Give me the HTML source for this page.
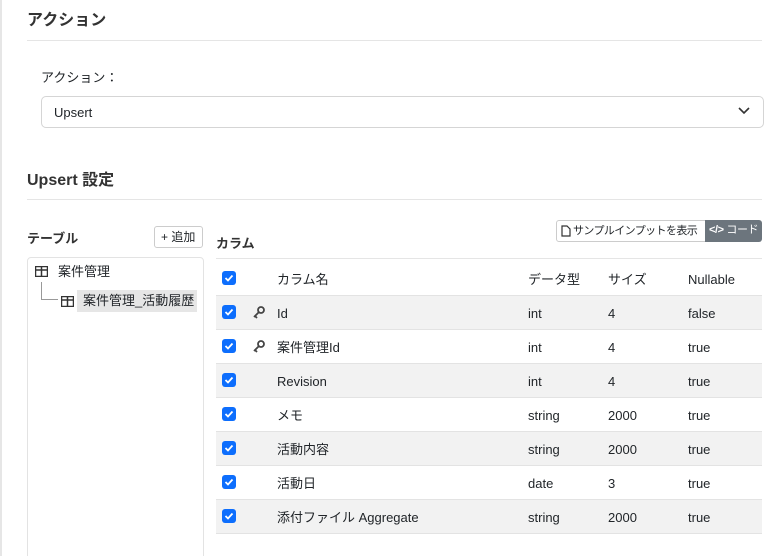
<!DOCTYPE html>
<html><head><meta charset="utf-8"><style>
*{box-sizing:border-box;margin:0;padding:0}
html,body{width:784px;height:556px;overflow:hidden}
body{background:#fff;font-family:"Liberation Sans","Noto Sans CJK JP",sans-serif;color:#212529;position:relative;font-size:13px;line-height:16px}
.a{position:absolute;white-space:nowrap}
.h{font-size:16px;line-height:20px;font-weight:bold;color:#333}
.line{position:absolute;height:1px;background:#e5e5e5}
.cb{position:absolute;width:14px;height:14px;background:#0d6efd;border-radius:3px}
.cb svg{position:absolute;left:2px;top:2px}
.row{position:absolute;left:216px;width:546px;height:34px;border-bottom:1px solid #e3e3e3}
.row span{position:absolute;top:10px;line-height:16px;white-space:nowrap}
.g{background:#f2f2f2}
</style></head><body>
<div class="a" style="left:0;top:0;width:2px;height:556px;background:#e6e6e6"></div>
<div class="a h" style="left:27px;top:11px">アクション</div>
<div class="line" style="left:27px;top:40px;width:735px"></div>
<div class="a" style="left:41px;top:70px">アクション：</div>
<div class="a" style="left:41px;top:96px;width:723px;height:32px;border:1px solid #d5d5d5;border-radius:5px"></div>
<div class="a" style="left:54px;top:105px">Upsert</div>
<svg class="a" style="left:737px;top:105px" width="14" height="12" viewBox="0 0 14 12"><path d="M2 3l5 5 5-5" stroke="#333" stroke-width="1.6" fill="none"/></svg>
<div class="a h" style="left:27px;top:171px">Upsert 設定</div>
<div class="line" style="left:27px;top:199px;width:735px"></div>
<div class="a" style="left:27px;top:231px;font-weight:bold;color:#333">テーブル</div>
<div class="a" style="left:154px;top:226px;width:49px;height:22px;border:1px solid #ccc;border-radius:3px;font-size:12px;line-height:14px;padding:3px 0 0 6px">+ 追加</div>
<div class="a" style="left:27px;top:257px;width:177px;height:310px;border:1px solid #e3e3e3;border-radius:4px"></div>
<svg class="a" style="left:35px;top:266px" width="13" height="11"><rect x="0.5" y="0.5" width="12" height="10" fill="none" stroke="#333" stroke-width="1.5"/><path d="M0 4h13M6.5 0v11" stroke="#333" stroke-width="1.5"/></svg>
<div class="a" style="left:58px;top:264px">案件管理</div>
<div class="a" style="left:41px;top:282px;width:17px;height:18px;border-left:1px solid #999;border-bottom:1px solid #999"></div>
<div class="a" style="left:77px;top:290px;width:120px;height:22px;background:#e6e6e6"></div>
<svg class="a" style="left:61px;top:296px" width="13" height="11"><rect x="0.5" y="0.5" width="12" height="10" fill="none" stroke="#333" stroke-width="1.5"/><path d="M0 4h13M6.5 0v11" stroke="#333" stroke-width="1.5"/></svg>
<div class="a" style="left:83px;top:293px">案件管理_活動履歴</div>
<div class="a" style="left:216px;top:236px;font-weight:bold;color:#333">カラム</div>
<div class="a" style="left:556px;top:220px;width:150px;height:22px;border:1px solid #ccc;border-radius:3px 0 0 3px;font-size:11px;line-height:14px;padding:3px 0 0 16px;letter-spacing:-0.6px;overflow:hidden">サンプルインプットを表示</div>
<svg class="a" style="left:561px;top:225px" width="10" height="12"><path d="M1 1h5l3 3v7H1z" fill="none" stroke="#333" stroke-width="1.2"/></svg>
<div class="a" style="left:705px;top:220px;width:57px;height:22px;background:#6c757d;border-radius:0 3px 3px 0;color:#fff;font-size:11px;line-height:14px;padding:3px 0 0 4px;letter-spacing:-0.4px;overflow:hidden"><b>&lt;/&gt;</b> コード</div>
<div class="line" style="left:216px;top:258px;width:546px"></div>
<div class="row" style="top:262px"><span style="left:61px">カラム名</span><span style="left:312px">データ型</span><span style="left:392px">サイズ</span><span style="left:472px">Nullable</span></div>
<div class="row g" style="top:296px"><span style="left:61px">Id</span><span style="left:312px">int</span><span style="left:392px">4</span><span style="left:472px">false</span></div>
<div class="row" style="top:330px"><span style="left:61px">案件管理Id</span><span style="left:312px">int</span><span style="left:392px">4</span><span style="left:472px">true</span></div>
<div class="row g" style="top:364px"><span style="left:61px">Revision</span><span style="left:312px">int</span><span style="left:392px">4</span><span style="left:472px">true</span></div>
<div class="row" style="top:398px"><span style="left:61px">メモ</span><span style="left:312px">string</span><span style="left:392px">2000</span><span style="left:472px">true</span></div>
<div class="row g" style="top:432px"><span style="left:61px">活動内容</span><span style="left:312px">string</span><span style="left:392px">2000</span><span style="left:472px">true</span></div>
<div class="row" style="top:466px"><span style="left:61px">活動日</span><span style="left:312px">date</span><span style="left:392px">3</span><span style="left:472px">true</span></div>
<div class="row g" style="top:500px"><span style="left:61px">添付ファイル Aggregate</span><span style="left:312px">string</span><span style="left:392px">2000</span><span style="left:472px">true</span></div>
<div class="cb" style="left:222px;top:271px"><svg width="10" height="10"><path d="M1.5 5l2.5 2.5 4.5-5" stroke="#fff" stroke-width="1.8" fill="none"/></svg></div>
<div class="cb" style="left:222px;top:305px"><svg width="10" height="10"><path d="M1.5 5l2.5 2.5 4.5-5" stroke="#fff" stroke-width="1.8" fill="none"/></svg></div>
<div class="cb" style="left:222px;top:339px"><svg width="10" height="10"><path d="M1.5 5l2.5 2.5 4.5-5" stroke="#fff" stroke-width="1.8" fill="none"/></svg></div>
<div class="cb" style="left:222px;top:373px"><svg width="10" height="10"><path d="M1.5 5l2.5 2.5 4.5-5" stroke="#fff" stroke-width="1.8" fill="none"/></svg></div>
<div class="cb" style="left:222px;top:407px"><svg width="10" height="10"><path d="M1.5 5l2.5 2.5 4.5-5" stroke="#fff" stroke-width="1.8" fill="none"/></svg></div>
<div class="cb" style="left:222px;top:441px"><svg width="10" height="10"><path d="M1.5 5l2.5 2.5 4.5-5" stroke="#fff" stroke-width="1.8" fill="none"/></svg></div>
<div class="cb" style="left:222px;top:475px"><svg width="10" height="10"><path d="M1.5 5l2.5 2.5 4.5-5" stroke="#fff" stroke-width="1.8" fill="none"/></svg></div>
<div class="cb" style="left:222px;top:509px"><svg width="10" height="10"><path d="M1.5 5l2.5 2.5 4.5-5" stroke="#fff" stroke-width="1.8" fill="none"/></svg></div>
<svg class="a" style="left:252px;top:305px" width="14" height="14"><circle cx="9" cy="5" r="3" fill="none" stroke="#444" stroke-width="1.8"/><path d="M7 7l-5 5M3 11l2 2" stroke="#444" stroke-width="1.8"/></svg>
<svg class="a" style="left:252px;top:339px" width="14" height="14"><circle cx="9" cy="5" r="3" fill="none" stroke="#444" stroke-width="1.8"/><path d="M7 7l-5 5M3 11l2 2" stroke="#444" stroke-width="1.8"/></svg>
</body></html>
